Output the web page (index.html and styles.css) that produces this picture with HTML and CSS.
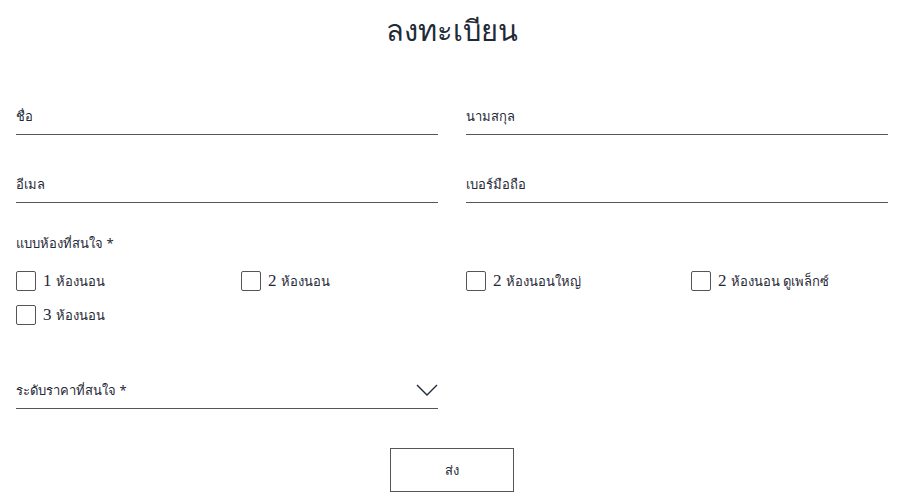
FILE: index.html
```html
<!DOCTYPE html>
<html lang="th">
<head>
    <meta charset="UTF-8">
    <meta name="viewport" content="width=device-width, initial-scale=1.0">
    <title>ลงทะเบียน</title>
    <link rel="stylesheet" href="styles.css">
</head>
<body>
    <div class="container">
        <h1>ลงทะเบียน</h1>

        <div class="fields">
            <label class="field"><span>ชื่อ</span></label>
            <label class="field"><span>นามสกุล</span></label>
            <label class="field"><span>อีเมล</span></label>
            <label class="field"><span>เบอร์มือถือ</span></label>
        </div>

        <div class="group-title">แบบห้องที่สนใจ *</div>
        <div class="options">
            <label class="option"><span class="box"></span><span class="num">1</span> ห้องนอน</label>
            <label class="option"><span class="box"></span><span class="num">2</span> ห้องนอน</label>
            <label class="option"><span class="box"></span><span class="num">2</span> ห้องนอนใหญ่</label>
            <label class="option"><span class="box"></span><span class="num">2</span> ห้องนอน ดูเพล็กซ์</label>
            <label class="option"><span class="box"></span><span class="num">3</span> ห้องนอน</label>
        </div>

        <div class="select">
            <span>ระดับราคาที่สนใจ *</span>
            <svg width="22" height="12" viewBox="0 0 22 12"><path d="M1 1 L11 11 L21 1" fill="none" stroke="#1f2a37" stroke-width="1.4"/></svg>
        </div>

        <div class="actions">
            <button class="submit">ส่ง</button>
        </div>
    </div>
</body>
</html>
```

FILE: styles.css
```css
body {
    margin: 0;
    padding: 0;
    background: #ffffff;
    color: #1f2a37;
    font-family: "Noto Sans", "Liberation Sans", sans-serif;
}
.container {
    padding: 0 12px 0 16px;
}
h1 {
    margin: 0;
    padding-top: 10px;
    text-align: center;
    font-size: 29px;
    font-weight: 400;
    line-height: 40px;
}
.fields {
    display: grid;
    grid-template-columns: 1fr 1fr;
    column-gap: 28px;
    row-gap: 32px;
    margin-top: 49px;
}
.field {
    display: block;
    height: 35px;
    border-bottom: 1px solid #555;
    font-size: 13px;
    line-height: 35px;
}
.group-title {
    margin-top: 28px;
    font-size: 13px;
    line-height: 24px;
}
.options {
    display: grid;
    grid-template-columns: repeat(4, 1fr);
    column-gap: 28px;
    row-gap: 12px;
    margin-top: 15px;
}
.option {
    display: flex;
    align-items: center;
    height: 22px;
    font-size: 13px;
}
.box {
    width: 18px;
    height: 18px;
    border: 1px solid #555;
    border-radius: 2px;
    margin-right: 7px;
}
.num {
    font-family: "Liberation Serif", serif;
    font-size: 17px;
    margin-right: 4px;
}
.select {
    display: flex;
    justify-content: space-between;
    align-items: center;
    width: 422px;
    height: 36px;
    margin-top: 46px;
    border-bottom: 1px solid #555;
    font-size: 13px;
}
.actions {
    display: flex;
    justify-content: center;
    margin-top: 39px;
}
.submit {
    width: 124px;
    height: 44px;
    background: #ffffff;
    border: 1px solid #555;
    color: #1f2a37;
    font-family: inherit;
    font-size: 13px;
    cursor: pointer;
}
```
